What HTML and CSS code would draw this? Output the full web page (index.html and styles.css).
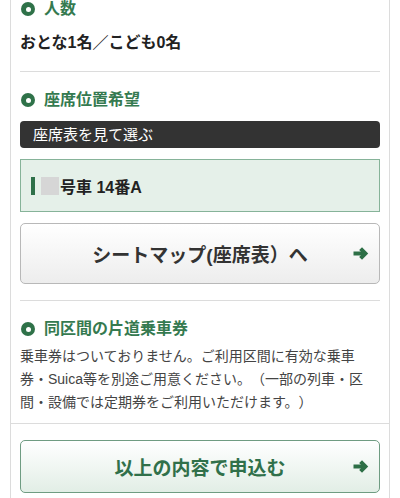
FILE: index.html
```html
<!DOCTYPE html>
<html lang="ja">
<head>
<meta charset="utf-8">
<title>予約内容</title>
<link rel="stylesheet" href="styles.css">
</head>
<body>
<div class="card">
  <section class="sec sec-first">
    <h2 class="heading"><span class="dot"></span>人数</h2>
    <p class="value">おとな1名／こども0名</p>
  </section>
  <section class="sec">
    <h2 class="heading"><span class="dot"></span>座席位置希望</h2>
    <div class="darkbar">座席表を見て選ぶ</div>
    <div class="seatbox">
      <span class="seatbar"></span>
      <span class="seatmask"></span>
      <span class="seattext">号車 14番A</span>
    </div>
    <a class="btn btn-gray" href="#">
      <span class="btn-label">シートマップ(座席表）へ</span>
      <svg class="arrow" width="16" height="13" viewBox="0 0 16 13"><path d="M0.5 6.5H12" stroke="currentColor" stroke-width="4" fill="none"/><path d="M7.6 1.7L12.4 6.5L7.6 11.3" stroke="currentColor" stroke-width="4" fill="none" stroke-linejoin="miter" stroke-miterlimit="4"/></svg>
    </a>
  </section>
  <section class="sec-full">
    <h2 class="heading"><span class="dot"></span>同区間の片道乗車券</h2>
    <p class="note">乗車券はついておりません。ご利用区間に有効な乗車券・Suica等を別途ご用意ください。（一部の列車・区間・設備では定期券をご利用いただけます。）</p>
  </section>
  <section class="sec-submit">
    <a class="btn btn-green" href="#">
      <span class="btn-label">以上の内容で申込む</span>
      <svg class="arrow" width="16" height="13" viewBox="0 0 16 13"><path d="M0.5 6.5H12" stroke="currentColor" stroke-width="4" fill="none"/><path d="M7.6 1.7L12.4 6.5L7.6 11.3" stroke="currentColor" stroke-width="4" fill="none" stroke-linejoin="miter" stroke-miterlimit="4"/></svg>
    </a>
  </section>
</div>
</body>
</html>
```
FILE: styles.css
```css
html, body {
  margin: 0;
  padding: 0;
  background: #fff;
  height: 498px;
  overflow: hidden;
}
body {
  font-family: "Liberation Sans", "Noto Sans CJK JP", sans-serif;
  color: #222;
  text-spacing-trim: space-all;
}
.card {
  margin: 0 10px;
  border-left: 1px solid #dcdcdc;
  border-right: 1px solid #dcdcdc;
  height: 520px;
}
.sec {
  margin: 0 9px;
  padding: 18px 0 16px;
  border-bottom: 1px solid #dcdcdc;
  display: flex;
  flex-direction: column;
}
.sec-first {
  margin-top: -19px;
}
.heading {
  margin: 0;
  display: flex;
  align-items: center;
  gap: 9px;
  height: 20px;
  font-size: 16px;
  line-height: 20px;
  font-weight: bold;
  color: #357a50;
}
.dot {
  width: 14px;
  height: 14px;
  margin-left: 1px;
  border-radius: 50%;
  background: #2f7249;
  position: relative;
  flex: none;
}
.dot::after {
  content: "";
  position: absolute;
  left: 4.5px;
  top: 4.5px;
  width: 5px;
  height: 5px;
  border-radius: 50%;
  background: #fff;
}
.value {
  margin: 12px 0 0;
  font-size: 16px;
  line-height: 24px;
  font-weight: bold;
  color: #222;
}
.darkbar {
  margin-top: 11px;
  height: 27px;
  line-height: 27px;
  background: #333;
  border-radius: 4px;
  color: #fff;
  font-size: 15px;
  padding-left: 13px;
}
.seatbox {
  margin-top: 11px;
  height: 51px;
  background: #e5f0e9;
  border: 1px solid #86b399;
  display: flex;
  align-items: center;
  padding-left: 10px;
}
.seatbar {
  width: 4px;
  height: 18px;
  background: #2e7049;
  margin-right: 6px;
}
.seatmask {
  width: 18px;
  height: 18px;
  background: #d6d6d6;
  margin-right: 1px;
}
.seattext {
  font-size: 16px;
  font-weight: bold;
  color: #222;
}
.btn {
  display: flex;
  align-items: center;
  justify-content: center;
  position: relative;
  text-decoration: none;
  border-radius: 5px;
  font-size: 19px;
  font-weight: bold;
}
.btn .arrow {
  position: absolute;
  right: 10px;
  top: 50%;
  margin-top: -6.5px;
  color: #2d6f46;
}
.btn-gray {
  margin-top: 11px;
  height: 59px;
  border: 1px solid #b8b8b8;
  background: linear-gradient(#ffffff, #ededed);
  color: #333;
}
.sec-full {
  padding: 18px 9px 9px;
  border-bottom: 1px solid #dcdcdc;
}
.note {
  margin: 6px 0 0;
  font-size: 14px;
  line-height: 23px;
  color: #444;
}
.sec-submit {
  padding: 16px 9px 20px;
}
.btn-green {
  height: 51px;
  border: 1px solid #6f9c82;
  background: linear-gradient(#ffffff, #e2eee6);
  color: #30704a;
}
```
